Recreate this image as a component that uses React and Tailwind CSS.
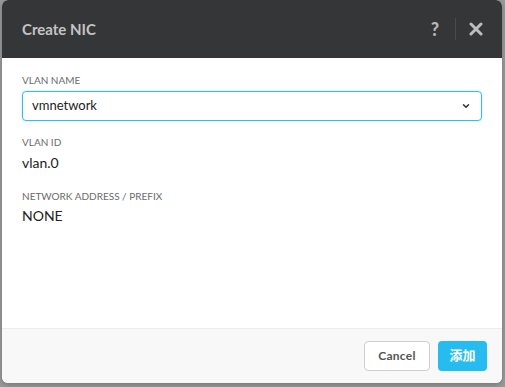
import { ChevronDown } from 'lucide-react';

export default function App() {
  return (
    <div className="w-[505px] h-[387px] bg-[#9b9b9b] relative overflow-hidden" style={{ fontFamily: 'Lato, "Noto Sans", "Noto Sans CJK SC", sans-serif' }}>
      {/* dialog */}
      <div className="absolute left-[2px] top-0 w-[500px] h-[383px] flex flex-col rounded-[6px] overflow-hidden bg-white shadow-[0_2px_6px_rgba(0,0,0,0.25)]">
        <div className="h-[58px] bg-[#353638] flex items-center pl-[20px] pr-[16px]">
          <span className="text-[15px] font-bold text-[#c4c4c4] flex-1">Create NIC</span>
          <span className="text-[18px] font-black text-[#b5b5b5] w-[20px] text-center">?</span>
          <div className="w-px h-[22px] bg-[#4a4b4d] mx-[10px]" />
          <svg width="14" height="14" viewBox="0 0 14 14" className="mx-[3px]">
            <path d="M2 2 L12 12 M12 2 L2 12" stroke="#bdbdbd" strokeWidth="3" strokeLinecap="round" />
          </svg>
        </div>

        <div className="flex-1 px-[20px] pt-[16px]">
          <div className="text-[10px] text-[#6b6b6b] uppercase leading-[12px]">VLAN Name</div>
          <div className="mt-[5px] h-[30px] w-[460px] border border-[#35bdf0] rounded-[4px] flex items-center pl-[9px] pr-[10px] shadow-[0_0_2px_rgba(53,189,240,0.5)]">
            <span className="flex-1 text-[13px] text-[#222]">vmnetwork</span>
            <ChevronDown size={10} strokeWidth={3.5} className="text-[#333]" />
          </div>

          <div className="mt-[15px] text-[10px] text-[#6b6b6b] uppercase leading-[12px]">VLAN ID</div>
          <div className="mt-[7px] text-[14px] text-[#222] leading-[16px]">vlan.0</div>

          <div className="mt-[19px] text-[10px] text-[#6b6b6b] uppercase leading-[12px]">Network Address / Prefix</div>
          <div className="mt-[6px] text-[14px] text-[#222] leading-[16px]">NONE</div>
        </div>

        <div className="h-[55px] bg-[#f8f8f8] border-t border-[#ececec] flex items-center justify-end gap-[8px] pr-[15px]">
          <button className="h-[30px] w-[66px] bg-white border border-[#cfcfcf] rounded-[4px] text-[12px] font-bold text-[#555] tracking-[0.3px]">Cancel</button>
          <button className="h-[30px] w-[49px] bg-[#26bcf0] rounded-[4px] text-[13px] font-bold text-white">添加</button>
        </div>
      </div>
    </div>
  );
}
